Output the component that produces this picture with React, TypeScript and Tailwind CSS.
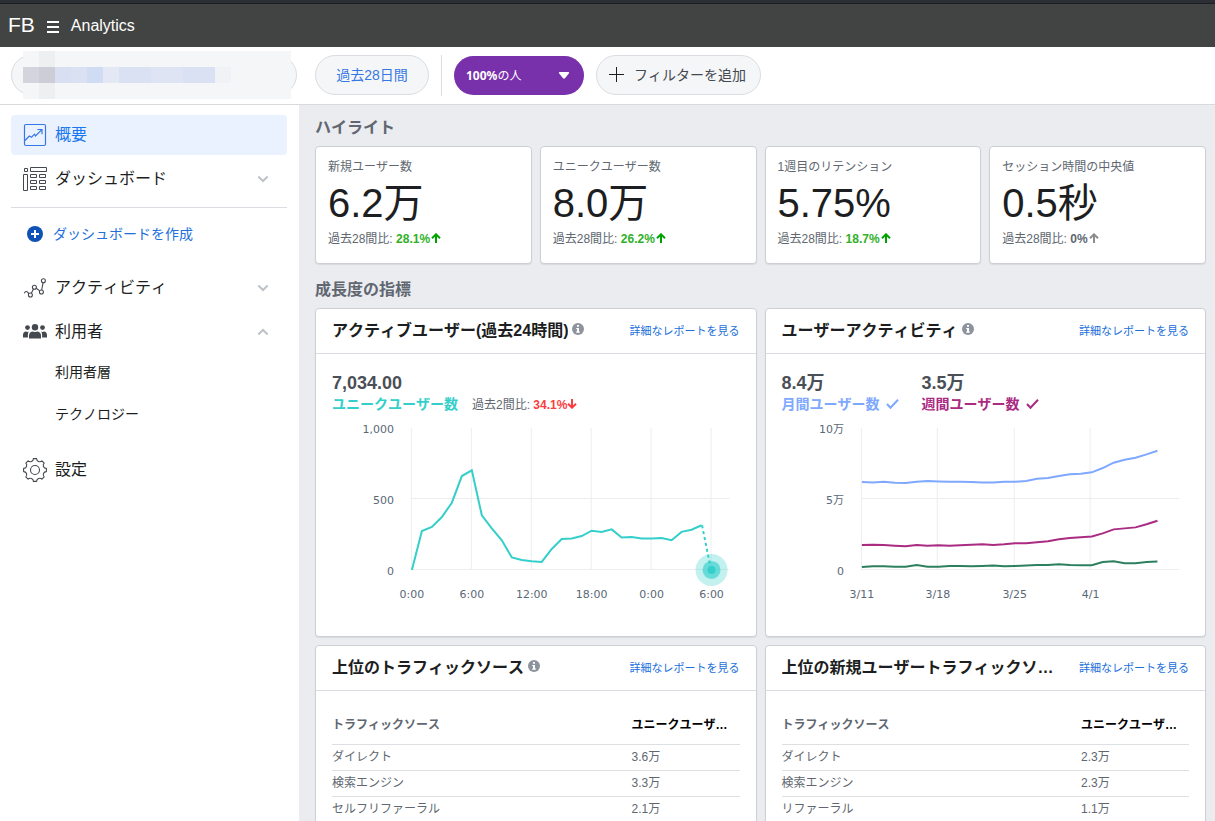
import type { ReactNode } from 'react';

const CHART_HEIGHT = 184;
const BASELINE = 150;
const PLOT_LEFT = 80;
const PLOT_RIGHT = 398;

const hourly = [
  0, 275, 303, 373, 474, 662, 702, 385, 293, 209, 89, 70, 61, 56, 148, 218, 221, 239, 277, 268, 286, 228, 232, 221,
  221, 225, 209, 268, 284, 315,
];
const monthly = [
  620, 617, 622, 615, 613, 622, 627, 624, 622, 622, 620, 617, 617, 622, 622, 627, 643, 648, 662, 674, 678, 688, 718,
  756, 777, 791, 815, 840,
];
const weekly = [
  176, 178, 176, 171, 167, 176, 171, 174, 171, 174, 178, 181, 176, 181, 188, 188, 195, 202, 216, 225, 230, 235, 258,
  286, 293, 300, 322, 347,
];
const daily = [
  21, 26, 26, 23, 23, 35, 23, 23, 28, 28, 26, 28, 31, 26, 28, 31, 35, 35, 40, 35, 33, 33, 56, 61, 47, 47, 56, 59,
];

function toPoints(values: number[], step: number) {
  return values.map((v, i) => `${(PLOT_LEFT + i * step).toFixed(1)},${(BASELINE - v * 0.142).toFixed(1)}`).join(' ');
}

function ArrowUp() {
  return (
    <svg className="inline-block align-baseline" width="10" height="10" viewBox="0 0 10 10" fill="none" stroke="currentColor" strokeWidth="2" aria-hidden="true">
      <path d="M5 10V1.5M1 5.2L5 1.3l4 3.9" />
    </svg>
  );
}

function ArrowDown() {
  return (
    <svg className="inline-block align-baseline" width="10" height="10" viewBox="0 0 10 10" fill="none" stroke="currentColor" strokeWidth="2" aria-hidden="true">
      <path d="M5 0v8.5M1 4.8l4 3.9 4-3.9" />
    </svg>
  );
}

function Check() {
  return (
    <svg width="13" height="10" viewBox="0 0 13 10" fill="none" stroke="currentColor" strokeWidth="2" aria-hidden="true">
      <path d="M1 5l3.5 3.8L12 .8" />
    </svg>
  );
}

function InfoIcon() {
  return (
    <svg className="mb-1 shrink-0" width="12" height="12" viewBox="0 0 12 12" aria-hidden="true">
      <circle cx="6" cy="6" r="6" fill="#8d949e" />
      <path d="M5 2h2v1.8H5zM4.2 4.9H7v3.6h.8v1.2H4.2V8.5H5V6h-.8z" fill="#fff" />
    </svg>
  );
}

function Chevron({ up = false }: { up?: boolean }) {
  return (
    <svg className="ml-auto" width="12" height="8" viewBox="0 0 12 8" fill="none" stroke="#bec3c9" strokeWidth="2" aria-hidden="true">
      <path d={up ? 'M1.3 6.5L6 2l4.7 4.5' : 'M1.3 1.5L6 6l4.7-4.5'} />
    </svg>
  );
}

function OverviewIcon() {
  return (
    <svg width="24" height="24" viewBox="0 0 24 24" fill="none" stroke="#3578e5" strokeWidth="1.2" aria-hidden="true">
      <rect x="1.5" y="1.5" width="21" height="21" rx="1.5" />
      <path d="M2 17.5L6.3 13l2.2 1.2 3-3 1 1.8L18.8 6.7M14.3 6.5H19v4.7" />
    </svg>
  );
}

function DashboardIcon() {
  return (
    <svg width="24" height="24" viewBox="0 0 24 24" fill="none" stroke="#444950" aria-hidden="true">
      <path d="M1.5 1.5h3v3h-3zM7.5.5h16v4h-16zM.5 7.5h4v16h-4zM7.5 7.5h6v3h-6zM16.5 7.5h6v3h-6zM7.5 13.5h6v3h-6zM16.5 13.5h6v3h-6zM7.5 19.5h6v3h-6zM16.5 19.5h6v3h-6z" />
    </svg>
  );
}

function ActivityIcon() {
  return (
    <svg width="24" height="24" viewBox="0 0 24 24" fill="none" stroke="#444950" strokeWidth="1.1" aria-hidden="true">
      <circle cx="7.4" cy="19" r="2" />
      <circle cx="11.4" cy="11.3" r="2" />
      <circle cx="18.4" cy="16" r="2" />
      <circle cx="20.4" cy="4.7" r="2" />
      <path d="M1.2 17.2c1-2 2.6-2.2 3.4-1l1.4 1.6M8.3 17.2l2.2-4.2M13.2 12.3l3.6 2.6M18.7 14l1.4-7.3" />
    </svg>
  );
}

function PeopleIcon() {
  return (
    <svg width="24" height="24" viewBox="0 0 24 24" fill="#444950" aria-hidden="true">
      <circle cx="12" cy="7.2" r="3.2" />
      <circle cx="4.5" cy="7.6" r="2.4" />
      <circle cx="19.5" cy="7.6" r="2.4" />
      <path d="M6 18.5v-3c0-2.6 2-4 4-4 1.3.8 2.7.8 4 0 2 0 4 1.4 4 4v3zM0 17.5V15c0-2 1.3-3.5 3-3.5.8.5 2 .5 2.8 0C5 13 4.9 14 4.9 15v2.5zM24 17.5V15c0-2-1.3-3.5-3-3.5-.8.5-2 .5-2.8 0 .8 1.5.9 2.5.9 3.5v2.5z" />
    </svg>
  );
}

function gearPath() {
  const at = (deg: number) => {
    const a = (deg * Math.PI) / 180;
    return `${(12 + 11.5 * Math.sin(a)).toFixed(2)} ${(12 - 11.5 * Math.cos(a)).toFixed(2)}`;
  };
  let d = `M${at(-8)}`;
  for (let i = 0; i < 8; i++) {
    d += `L${at(i * 45 + 8)}A3.1 3.1 0 0 0 ${at(i * 45 + 37)}`;
  }
  return d + 'Z';
}

function GearIcon() {
  return (
    <svg width="24" height="24" viewBox="0 0 24 24" fill="none" stroke="#444950" strokeWidth="1.1" strokeLinejoin="round" aria-hidden="true">
      <path d={gearPath()} />
      <circle cx="12" cy="12" r="4.5" />
    </svg>
  );
}

function NavItem({ icon, label, chevron }: { icon: ReactNode; label: string; chevron?: ReactNode }) {
  return (
    <button type="button" className="flex h-10 w-full items-center gap-2 pr-[18px] pl-3 text-left text-base text-[#1c1e21]">
      {icon}
      <span>{label}</span>
      {chevron}
    </button>
  );
}

function Sidebar() {
  return (
    <nav className="w-[299px] shrink-0 bg-white pt-[10px] pr-3 pl-[11px]">
      <a href="#overview" className="flex h-10 items-center gap-2 rounded bg-[#ebf2ff] px-3 text-base text-[#1877f2]">
        <OverviewIcon />
        概要
      </a>
      <div className="mt-1 border-b border-[#dadde1] pb-2">
        <NavItem icon={<DashboardIcon />} label="ダッシュボード" chevron={<Chevron />} />
      </div>
      <button type="button" className="mt-[6px] flex h-10 w-full items-center gap-[10px] px-4 text-left text-sm text-[#216fdb]">
        <svg width="16" height="16" viewBox="0 0 16 16" aria-hidden="true">
          <circle cx="8" cy="8" r="8" fill="#0f52b5" />
          <path d="M8 4v8M4 8h8" stroke="#fff" strokeWidth="2" />
        </svg>
        ダッシュボードを作成
      </button>
      <div className="mt-[14px] flex flex-col gap-1">
        <NavItem icon={<ActivityIcon />} label="アクティビティ" chevron={<Chevron />} />
        <NavItem icon={<PeopleIcon />} label="利用者" chevron={<Chevron up />} />
      </div>
      <div className="flex flex-col gap-[2px] text-sm text-[#1c1e21]">
        <a href="#demographics" className="flex h-10 items-center pl-11">
          利用者層
        </a>
        <a href="#technology" className="flex h-10 items-center pl-11">
          テクノロジー
        </a>
      </div>
      <div className="mt-4">
        <NavItem icon={<GearIcon />} label="設定" />
      </div>
    </nav>
  );
}

function Header() {
  return (
    <header className="flex h-[47px] shrink-0 items-center border-t-[3px] border-[#2c2f36] bg-[#424443] pl-2 text-white shadow-[inset_0_1px_0_#1d1e20]">
      <span className="text-[21px] leading-6">FB</span>
      <button type="button" aria-label="メニュー" className="ml-3 flex w-3 flex-col gap-[3px] pt-1">
        <span className="h-[2px] w-full bg-white" />
        <span className="h-[2px] w-full bg-white" />
        <span className="h-[2px] w-full bg-white" />
      </button>
      <span className="ml-3 pt-px text-base">Analytics</span>
    </header>
  );
}

function Toolbar() {
  return (
    <div className="flex h-[58px] shrink-0 items-start border-b border-[#d8dadd] bg-white pt-2 pl-[11px]">
      <button type="button" aria-label="アプリ" className="relative h-10 w-[286px] rounded-full border border-[#dadde1] bg-[#f5f6f7]">
        <span className="absolute -top-[5px] left-[11px] flex h-12 w-[268px] flex-col justify-center bg-[#f5f6f8]">
          <span className="absolute left-4 h-12 w-4 bg-[#eeeff1]" />
          <span className="relative flex h-4">
            <span className="w-4 bg-[#d3d4dd]" />
            <span className="w-4 bg-[#cccdd6]" />
            <span className="w-4 bg-[#d9dff2]" />
            <span className="w-4 bg-[#dae1f3]" />
            <span className="w-4 bg-[#d0dcf4]" />
            <span className="w-4 bg-[#e3e8f4]" />
            <span className="w-8 bg-[#dae1f3]" />
            <span className="w-8 bg-[#dee4f3]" />
            <span className="w-8 bg-[#dae1f3]" />
            <span className="w-4 bg-[#f1f2f5]" />
          </span>
        </span>
      </button>
      <button type="button" className="ml-[18px] h-10 w-[114px] rounded-full border border-[#dadde1] bg-[#f5f6f7] text-sm text-[#3578e5]">
        過去28日間
      </button>
      <span className="ml-3 h-[41px] w-px bg-[#dadde1]" />
      <button type="button" className="mt-px ml-3 flex h-[39px] w-[130px] items-center justify-between rounded-full bg-[#7930ab] pr-[14px] pl-3 font-['Noto_Sans','Noto_Sans_CJK_JP',sans-serif] text-xs text-white">
        <span>
          <b>100%</b>の人
        </span>
        <svg width="12" height="7" viewBox="0 0 12 7" fill="#fff" aria-hidden="true">
          <path d="M1.5 0h9q1 .5.3 1.4L7 6.3q-1 .9-2 0L1.2 1.4Q.5.5 1.5 0z" />
        </svg>
      </button>
      <button type="button" className="ml-3 flex h-10 items-center gap-[10px] rounded-full border border-[#dadde1] bg-[#f5f6f7] pr-[14px] pl-[11px] text-sm text-[#444950]">
        <svg width="16" height="16" viewBox="0 0 16 16" stroke="#1c1e21" aria-hidden="true">
          <path d="M8.5 0v15M1 7.5h15" />
        </svg>
        フィルターを追加
      </button>
    </div>
  );
}

const stats = [
  { label: '新規ユーザー数', value: '6.2万', change: '28.1%', rising: true },
  { label: 'ユニークユーザー数', value: '8.0万', change: '26.2%', rising: true },
  { label: '1週目のリテンション', value: '5.75%', change: '18.7%', rising: true },
  { label: 'セッション時間の中央値', value: '0.5秒', change: '0%', rising: false },
];

function StatCard({ label, value, change, rising }: (typeof stats)[number]) {
  return (
    <section className="rounded border border-[#ccd0d5] bg-white px-3 pt-3 pb-4 shadow-[0_1px_1px_rgba(0,0,0,0.08)]">
      <h3 className="text-xs leading-4 text-[#606770]">{label}</h3>
      <p className="mt-1 text-[40px] leading-[48px] text-[#1c1e21]">{value}</p>
      <p className="mt-1 text-xs leading-4 text-[#606770]">
        過去28間比:{' '}
        <span className={rising ? 'font-bold text-[#2fb127]' : 'font-bold text-[#606770]'}>
          {change}
          <span className={rising ? 'pl-px text-[#00a400]' : 'pl-px text-[#8d8d8d]'}>
            <ArrowUp />
          </span>
        </span>
      </p>
    </section>
  );
}

function Panel({ title, info = true, children }: { title: string; info?: boolean; children: ReactNode }) {
  return (
    <section className="min-w-0 rounded border border-[#ccd0d5] bg-white shadow-[0_1px_1px_rgba(0,0,0,0.08)]">
      <div className="flex h-[45px] items-center border-b border-[#dadde1] px-4">
        <div className="mr-3 flex min-w-0 flex-1 items-center gap-1">
          <h3 className="truncate text-base leading-6 font-bold text-[#1c1e21]">{title}</h3>
          {info && <InfoIcon />}
        </div>
        <a href="#report" className="shrink-0 text-[11px] leading-4 text-[#216fdb]">
          詳細なレポートを見る
        </a>
      </div>
      {children}
    </section>
  );
}

type Tick = { x: number; label: string };

function Chart({ label, yLabels, ticks, children }: { label: string; yLabels: string[]; ticks: Tick[]; children: ReactNode }) {
  return (
    <svg
      className="mt-[7px] block h-[184px] w-full overflow-visible font-['DejaVu_Sans','Noto_Sans_CJK_JP',sans-serif] text-[11px]"
      viewBox={`0 0 408 ${CHART_HEIGHT}`}
      role="img"
      aria-label={label}
    >
      <g stroke="#ebedf0">
        {ticks.map((t) => (
          <path key={t.x} d={`M${t.x}.5 8V150`} />
        ))}
        <path d={`M${PLOT_LEFT - 0.5} 78.5H${PLOT_RIGHT}M${PLOT_LEFT - 0.5} 149.5H${PLOT_RIGHT}`} />
      </g>
      <g fill="#5a6876">
        {yLabels.map((text, i) => (
          <text key={text} x="62" y={13 + i * 71} textAnchor="end">
            {text}
          </text>
        ))}
        {ticks.map((t) => (
          <text key={t.x} x={t.x + 1} y="178" textAnchor="middle">
            {t.label}
          </text>
        ))}
      </g>
      {children}
    </svg>
  );
}

const hourTicks: Tick[] = ['0:00', '6:00', '12:00', '18:00', '0:00', '6:00'].map((label, i) => ({ x: 79 + i * 60, label }));
const dayTicks: Tick[] = [
  { x: 79, label: '3/11' },
  { x: 155, label: '3/18' },
  { x: 232, label: '3/25' },
  { x: 308, label: '4/1' },
];

function ActiveUsers() {
  return (
    <Panel title="アクティブユーザー(過去24時間)">
      <div className="px-4 pt-[17px] pb-8">
        <p className="text-lg leading-6 font-bold text-[#4b4f56]">7,034.00</p>
        <div className="flex items-end gap-[14px]">
          <span className="text-sm leading-[18px] font-bold text-[#35cfcb]">ユニークユーザー数</span>
          <span className="text-xs leading-4 text-[#606770]">
            過去2間比:{' '}
            <span className="font-bold text-[#fa3e3e]">
              34.1%
              <ArrowDown />
            </span>
          </span>
        </div>
        <Chart label="アクティブユーザー" yLabels={['1,000', '500', '0']} ticks={hourTicks}>
          <polyline points={toPoints(hourly, 10)} fill="none" stroke="#35cfcb" strokeWidth="2" />
          <path d="M370.5 105.3L379.5 150" stroke="#35cfcb" strokeWidth="2" strokeDasharray="3 3" />
          <circle cx="380" cy="150" r="16" fill="#35cfcb" fillOpacity="0.3" />
          <circle cx="380" cy="150" r="9" fill="#35cfcb" fillOpacity="0.65" />
          <circle cx="380" cy="150" r="4" fill="#35cfcb" />
        </Chart>
      </div>
    </Panel>
  );
}

function UserActivity() {
  return (
    <Panel title="ユーザーアクティビティ">
      <div className="px-4 pt-[17px] pb-8">
        <div className="flex">
          <div className="w-[140px]">
            <p className="text-lg leading-6 font-bold text-[#4b4f56]">8.4万</p>
            <p className="flex items-center gap-[6px] text-sm leading-[18px] font-bold text-[#7fa8ff]">
              月間ユーザー数
              <Check />
            </p>
          </div>
          <div className="w-[140px]">
            <p className="text-lg leading-6 font-bold text-[#4b4f56]">3.5万</p>
            <p className="flex items-center gap-[6px] text-sm leading-[18px] font-bold text-[#aa2b82]">
              週間ユーザー数
              <Check />
            </p>
          </div>
        </div>
        <Chart label="ユーザーアクティビティ" yLabels={['10万', '5万', '0']} ticks={dayTicks}>
          <g fill="none" strokeWidth="2">
            <polyline points={toPoints(monthly, 10.96)} stroke="#7fa8ff" />
            <polyline points={toPoints(weekly, 10.96)} stroke="#aa2b82" />
            <polyline points={toPoints(daily, 10.96)} stroke="#2d805f" />
          </g>
        </Chart>
      </div>
    </Panel>
  );
}

function SourceTable({ rows }: { rows: [string, string][] }) {
  return (
    <div className="px-4 pt-[13px] pb-4">
      <table className="w-full table-fixed border-collapse text-left text-xs text-[#606770]">
        <thead>
          <tr className="h-10 border-b border-[#dddfe2]">
            <th className="pt-[2px] font-bold">トラフィックソース</th>
            <th className="w-[108px] truncate pt-[2px] pr-2 font-bold text-black">ユニークユーザー数</th>
          </tr>
        </thead>
        <tbody>
          {rows.map(([source, users]) => (
            <tr key={source} className="h-[26px] border-b border-[#dddfe2]">
              <td>{source}</td>
              <td>{users}</td>
            </tr>
          ))}
        </tbody>
      </table>
    </div>
  );
}

export default function App() {
  return (
    <div
      className="flex h-screen flex-col overflow-hidden bg-[#ebecf0] font-['Liberation_Sans','Noto_Sans_CJK_JP',sans-serif] [font-kerning:none]"
      lang="ja"
    >
      <Header />
      <Toolbar />
      <div className="flex min-h-0 flex-1">
        <Sidebar />
        <main className="min-w-0 flex-1 overflow-hidden pt-[11px] pr-[9px] pl-4">
          <h2 className="mb-[6px] text-base leading-6 font-bold text-[#606770]">ハイライト</h2>
          <div className="grid grid-cols-4 gap-2">
            {stats.map((s) => (
              <StatCard key={s.label} {...s} />
            ))}
          </div>
          <h2 className="mt-[14px] mb-[6px] text-base leading-6 font-bold text-[#606770]">成長度の指標</h2>
          <div className="grid grid-cols-2 gap-2">
            <ActiveUsers />
            <UserActivity />
            <Panel title="上位のトラフィックソース">
              <SourceTable
                rows={[
                  ['ダイレクト', '3.6万'],
                  ['検索エンジン', '3.3万'],
                  ['セルフリファーラル', '2.1万'],
                ]}
              />
            </Panel>
            <Panel title="上位の新規ユーザートラフィックソース" info={false}>
              <SourceTable
                rows={[
                  ['ダイレクト', '2.3万'],
                  ['検索エンジン', '2.3万'],
                  ['リファーラル', '1.1万'],
                ]}
              />
            </Panel>
          </div>
        </main>
      </div>
    </div>
  );
}
